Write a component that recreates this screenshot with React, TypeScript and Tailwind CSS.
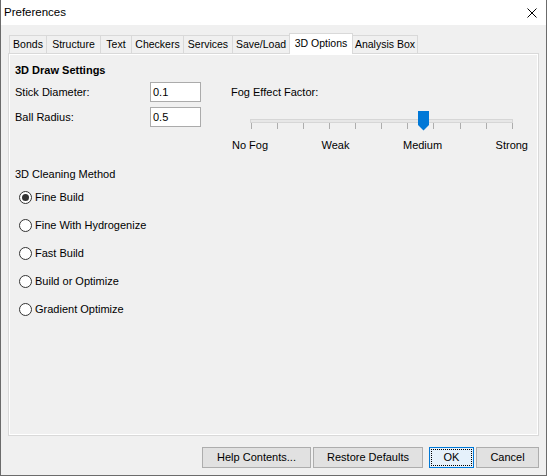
// Preferences dialog, "3D Options" page, drawn as a Win10-style form.

const tabs = [
  { label: "Bonds", w: "w-[37px]" },
  { label: "Structure", w: "w-[54px]" },
  { label: "Text", w: "w-[31px]" },
  { label: "Checkers", w: "w-[52px]" },
  { label: "Services", w: "w-[49px]" },
  { label: "Save/Load", w: "w-[57px]" },
  { label: "3D Options", w: "w-[64px]", active: true },
  { label: "Analysis Box", w: "w-[65px]", last: true },
];

const methods = [
  "Fine Build",
  "Fine With Hydrogenize",
  "Fast Build",
  "Build or Optimize",
  "Gradient Optimize",
];

const ticks = [20, 46, 72, 98, 124, 150, 176, 202, 229, 255, 281];

function Radio({ label, checked }: { label: string; checked?: boolean }) {
  return (
    <div className="flex h-[28px] items-center pl-[4px]">
      <span className="flex h-[13px] w-[13px] items-center justify-center rounded-full border border-[#333333] bg-white">
        {checked && <span className="h-[7px] w-[7px] rounded-full bg-[#333333]" />}
      </span>
      <span className="ml-[3px]">{label}</span>
    </div>
  );
}

function Field({ label, value, className }: { label: string; value: string; className?: string }) {
  return (
    <div className={"flex h-[20px] items-center " + (className ?? "")}>
      <span className="w-[135px]">{label}</span>
      <div className="flex h-[20px] w-[51px] items-center border border-[#ababab] bg-white pl-[2px]">
        {value}
      </div>
    </div>
  );
}

function FogSlider() {
  return (
    <svg width="297" height="36" viewBox="0 0 297 36" className="block">
      <rect x="19.5" y="17.5" width="262" height="3" fill="#e7e7e7" stroke="#d6d6d6" />
      {ticks.map((x) => (
        <line key={x} x1={x + 0.5} y1="21" x2={x + 0.5} y2="27" stroke="#adadad" />
      ))}
      <polygon points="187,9 198,9 198,23 192.5,28.5 187,23" fill="#0078d7" />
    </svg>
  );
}

export default function App() {
  return (
    <div className="flex h-[476px] w-[547px] flex-col border-x border-b border-[#6b6b6b] bg-[#f0f0f0] font-['Liberation_Sans',Arial,sans-serif] text-[11px] text-black">
      <div className="flex h-[25px] shrink-0 items-center justify-between bg-white pl-[3px] pr-[9px]">
        <span className="text-[11.5px]">Preferences</span>
        <svg width="10" height="10" viewBox="0 0 10 10">
          <path d="M0.5 0.5L9.5 9.5M9.5 0.5L0.5 9.5" stroke="#000" strokeWidth="1" />
        </svg>
      </div>

      <div className="flex flex-1 flex-col px-[7px] pt-[8px] pb-[7px]">
        {/* tab strip */}
        <div className="flex h-[20px] items-end pl-[1px] text-[10.5px]">
          {tabs.map((t) =>
            t.active ? (
              <div
                key={t.label}
                className={`relative z-10 -mb-[1px] flex h-[21px] items-center justify-center border-x border-t border-[#d9d9d9] bg-white ${t.w}`}
              >
                {t.label}
              </div>
            ) : (
              <div
                key={t.label}
                className={`flex h-[18px] items-center justify-center border-t border-[#d9d9d9] pt-[1px] ${
                  t.last ? "border-r" : "border-l"
                } ${t.w}`}
              >
                {t.label}
              </div>
            ),
          )}
        </div>

        {/* page */}
        <div className="h-[383px] border border-[#d9d9d9]">
          <div className="flex h-full flex-col border border-white pl-[5px] pt-[7px]">
            <div className="flex">
              <div className="flex w-[186px] flex-col">
                <div className="h-[16px] font-bold leading-[16px]">3D Draw Settings</div>
                <Field label="Stick Diameter:" value="0.1" className="mt-[4px]" />
                <Field label="Ball Radius:" value="0.5" className="mt-[5px]" />
              </div>
              <div className="ml-[30px] flex w-[297px] flex-col">
                <div className="mt-[20px] h-[20px] leading-[20px]">Fog Effect Factor:</div>
                <FogSlider />
                <div className="flex h-[14px] justify-between pl-[1px] leading-[14px]">
                  <span>No Fog</span>
                  <span>Weak</span>
                  <span>Medium</span>
                  <span>Strong</span>
                </div>
              </div>
            </div>

            <div className="mt-[14px] h-[16px] leading-[16px]">3D Cleaning Method</div>
            <div className="mt-[1px] flex flex-col">
              {methods.map((m, i) => (
                <Radio key={m} label={m} checked={i === 0} />
              ))}
            </div>
          </div>
        </div>

        {/* buttons */}
        <div className="mt-[11px] flex h-[21px] justify-end">
          <button className="h-[21px] w-[109px] border border-[#adadad] bg-[#e1e1e1]">Help Contents...</button>
          <button className="ml-[2px] h-[21px] w-[110px] border border-[#adadad] bg-[#e1e1e1]">Restore Defaults</button>
          <button className="ml-[6px] h-[21px] w-[45px] border border-[#0078d7] bg-[#e5f1fb] outline-1 outline-offset-[-3px] outline-black outline-dotted">
            OK
          </button>
          <button className="ml-[2px] h-[21px] w-[63px] border border-[#adadad] bg-[#e1e1e1]">Cancel</button>
        </div>
      </div>
    </div>
  );
}
